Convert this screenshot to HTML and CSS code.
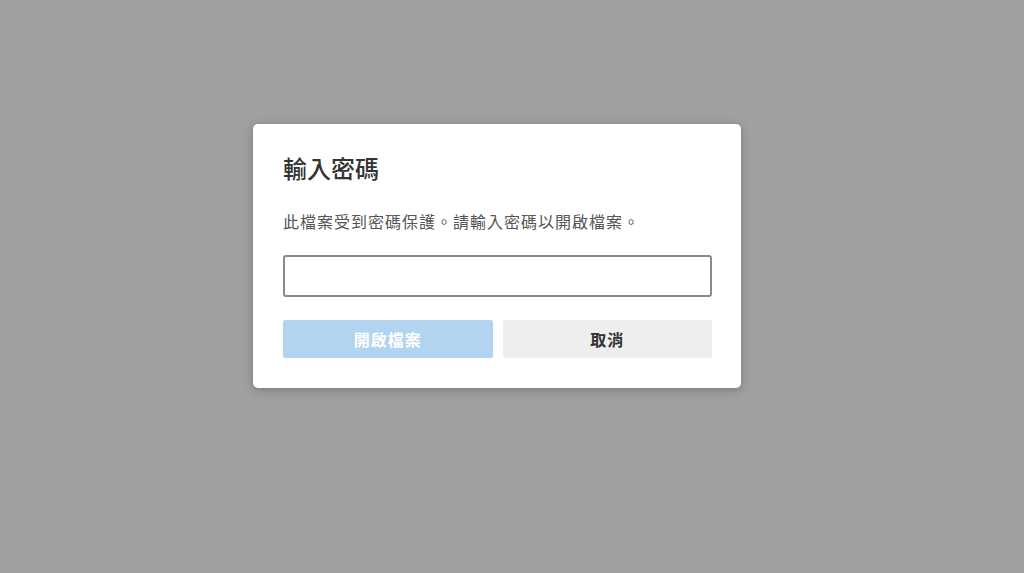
FILE: index.html
```html
<!DOCTYPE html>
<html lang="zh-Hant">
<head>
    <meta charset="UTF-8">
    <meta name="viewport" content="width=device-width, initial-scale=1.0">
    <title>輸入密碼</title>
    <link rel="stylesheet" href="styles.css">
</head>
<body>
    <div class="overlay">
        <div class="dialog">
            <h2 class="dialog-title">輸入密碼</h2>
            <p class="dialog-text">此檔案受到密碼保護。請輸入密碼以開啟檔案。</p>
            <input class="password-input" type="password" autocomplete="off">
            <div class="dialog-buttons">
                <button class="btn btn-open" disabled>開啟檔案</button>
                <button class="btn btn-cancel">取消</button>
            </div>
        </div>
    </div>
</body>
</html>
```

FILE: styles.css
```css
html, body {
    margin: 0;
    padding: 0;
    height: 100%;
}
body {
    background-color: #a0a0a0;
    font-family: "Noto Sans CJK TC", "Noto Sans", sans-serif;
    overflow: hidden;
}
.overlay {
    padding: 124px 0 0 253px;
}
.dialog {
    width: 429px;
    padding: 30px 29px 30px 30px;
    background-color: #fff;
    border-radius: 5px;
    box-shadow: 0 2px 10px rgba(0, 0, 0, 0.25);
}
.dialog-title {
    margin: 0;
    font-size: 24px;
    line-height: 28px;
    font-weight: 500;
    color: #333;
}
.dialog-text {
    margin: 27px 0 22px;
    font-size: 16px;
    line-height: 24px;
    color: #555;
    letter-spacing: 1px;
}
.password-input {
    display: block;
    box-sizing: border-box;
    width: 100%;
    height: 42px;
    margin: 0;
    border: 2px solid #8a8a8a;
    border-radius: 3px;
    background-color: #fff;
    font-size: 16px;
    padding: 0 10px;
    outline: none;
}
.dialog-buttons {
    display: flex;
    gap: 10px;
    margin-top: 23px;
}
.btn {
    flex: 1;
    height: 38px;
    border: none;
    border-radius: 2px;
    font-family: inherit;
    font-size: 16px;
    font-weight: 700;
    letter-spacing: 1px;
    cursor: pointer;
}
.btn-open {
    background-color: #b3d4f0;
    color: #fff;
}
.btn-cancel {
    background-color: #eeeeee;
    color: #333;
}
```
